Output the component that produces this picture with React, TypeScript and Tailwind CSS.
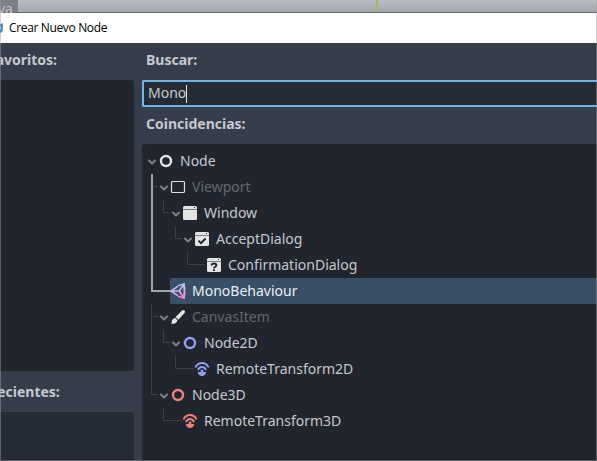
import React from "react";

type IconKind =
  | "node"
  | "viewport"
  | "window"
  | "accept"
  | "confirm"
  | "mono"
  | "canvas"
  | "node2d"
  | "remote2d"
  | "node3d"
  | "remote3d";

function Ring({ color }: { color: string }) {
  return <circle cx="8" cy="8" r="5" fill="none" stroke={color} strokeWidth="2.400" />;
}

function Remote({ color }: { color: string }) {
  return (
    <g fill="none" stroke={color} strokeWidth="2" strokeLinecap="round">
      <path d="M1.800 5.700C3.500 3.100 5.600 2.100 8 2.100s4.500 1 6.200 3.600" />
      <path d="M4.300 8.300C5.100 6.700 6.400 5.900 8 5.900s2.900.8 3.700 2.400" />
      <path
        d="M8 8.400a1.500 1.500 0 0 1 1.300 2.200V11H12.200c0 2.300-1.800 4-4.200 4s-4.200-1.700-4.200-4h2.900v-.4A1.500 1.500 0 0 1 8 8.400z"
        fill={color}
        stroke="none"
      />
    </g>
  );
}

function WindowFrame() {
  return (
    <>
      <path d="M2.500 1h11A1.500 1.500 0 0 1 15 2.500V4H1V2.500A1.500 1.500 0 0 1 2.500 1z" fill="#e4e4e4" />
      <path d="M1 5h14v8.500a1.500 1.500 0 0 1-1.500 1.500h-11A1.500 1.500 0 0 1 1 13.500z" fill="#e4e4e4" />
      <path d="M1 4h14v1H1z" fill="#7d8086" />
      <path d="M12 2h1v1h-1z" fill="#21262e" />
    </>
  );
}

function Icon({ kind }: { kind: IconKind }) {
  return (
    <svg className="h-4 w-4 shrink-0" viewBox="0 0 16 16">
      {kind === "node" && <Ring color="#e4e4e4" />}
      {kind === "node2d" && <Ring color="#8f9fee" />}
      {kind === "node3d" && <Ring color="#f07f80" />}
      {kind === "remote2d" && <Remote color="#8f9fee" />}
      {kind === "remote3d" && <Remote color="#f07f80" />}
      {kind === "viewport" && (
        <rect x="1.500" y="2.500" width="13" height="11" rx="1" fill="none" stroke="#e0e0e0" strokeWidth="1.200" />
      )}
      {kind === "window" && <WindowFrame />}
      {kind === "accept" && (
        <>
          <WindowFrame />
          <path d="M4.500 9.600l2.500 2.500 4.600-4.600" fill="none" stroke="#21262e" strokeWidth="2" />
        </>
      )}
      {kind === "confirm" && (
        <>
          <WindowFrame />
          <path
            d="M5.600 8.500C5.700 7.100 6.800 6.500 8 6.500c1.400 0 2.400.7 2.400 1.800C10.400 9.900 8 9.700 8 11.400M8 12.300V14"
            fill="none"
            stroke="#21262e"
            strokeWidth="1.800"
          />
        </>
      )}
      {kind === "mono" && (
        <>
          <defs>
            <linearGradient id="monoFill" gradientUnits="userSpaceOnUse" x1="6" y1="2" x2="11" y2="15">
              <stop offset="0.1" stopColor="#b4bff2" />
              <stop offset="0.55" stopColor="#d8b0ee" />
              <stop offset="1" stopColor="#ff80dc" />
            </linearGradient>
          </defs>
          <g fill="none" stroke="url(#monoFill)" strokeWidth="1.600" strokeLinejoin="round" strokeLinecap="round">
            <path d="M7.300 3.600L1.200 8l6.100 4.400" />
            <path d="M8.600 2.500L14 .9l.8 5.200" />
            <path d="M8.600 13.500l5.400 1.600.8-5.200" />
            <path d="M1.200 8h8M9.200 8l3.900-5.700M9.200 8l3.900 5.700M14 .9c.5 4.700.5 9.500 0 14.200" />
          </g>
        </>
      )}
      {kind === "canvas" && (
        <g fill="#e4e4e4">
          <path d="M12 1.500c.8-.8 1.900-.7 2.500-.1.700.7.600 1.700 0 2.500L8.400 10.700 5.500 7.900z" />
          <path d="M4.800 8.600l2.700 2.700-.6 1.100C6.400 14.500 3.500 15.200 1 14.700c1-.8.600-1.500.8-2.600.3-1.600 1.500-2.400 2.500-2.700z" />
        </g>
      )}
    </svg>
  );
}

function Chevron() {
  return (
    <svg className="h-2 w-2 shrink-0" viewBox="0 0 8 8">
      <path d="M1 2.500l3 3 3-3" fill="none" stroke="#7d8087" strokeWidth="2" strokeLinecap="round" strokeLinejoin="round" />
    </svg>
  );
}

interface Row {
  label: string;
  icon: IconKind;
  indent: string;
  leaf?: boolean;
  muted?: boolean;
  selected?: boolean;
}

const rows: Row[] = [
  { label: "Node", icon: "node", indent: "w-[6px]" },
  { label: "Viewport", icon: "viewport", indent: "w-[18px]", muted: true },
  { label: "Window", icon: "window", indent: "w-[30px]" },
  { label: "AcceptDialog", icon: "accept", indent: "w-[42px]" },
  { label: "ConfirmationDialog", icon: "confirm", indent: "w-[54px]", leaf: true },
  { label: "MonoBehaviour", icon: "mono", indent: "w-[18px]", leaf: true, selected: true },
  { label: "CanvasItem", icon: "canvas", indent: "w-[18px]", muted: true },
  { label: "Node2D", icon: "node2d", indent: "w-[30px]" },
  { label: "RemoteTransform2D", icon: "remote2d", indent: "w-[42px]", leaf: true },
  { label: "Node3D", icon: "node3d", indent: "w-[18px]" },
  { label: "RemoteTransform3D", icon: "remote3d", indent: "w-[30px]", leaf: true },
];

function TreeRow({ row }: { row: Row }) {
  const tone = row.muted ? "text-[#63666d]" : row.selected ? "text-[#e9eef5]" : "text-[#c5c8ce]";
  return (
    <div className="flex h-[26px] items-stretch">
      <div className={`shrink-0 ${row.indent}`} />
      <div className="flex w-[10px] shrink-0 items-center pt-px">{!row.leaf && <Chevron />}</div>
      <div className={`flex grow items-center gap-[6px] ${row.selected ? "rounded-l-[2px] bg-[#384f66]" : ""}`}>
        <Icon kind={row.icon} />
        <span className={`whitespace-nowrap text-[14px] leading-[26px] ${tone}`}>{row.label}</span>
      </div>
    </div>
  );
}

function TreeLines() {
  return (
    <svg className="pointer-events-none absolute left-0 top-0" width="80" height="316" viewBox="0 0 80 316" fill="none">
      <path
        stroke="#3b4048"
        d="M11 42.500h5M9.500 160v90.500H16M11 172.500h5M21.500 56v12.500H28M33.500 82v12.500H40M45.500 108v12.500H63M21.500 186v12.500H28M33.500 212v12.500H52M21.500 264v12.500H40"
      />
      <path stroke="#a0a3aa" strokeWidth="2" d="M10 30v117h19" />
    </svg>
  );
}

function Heading({ children }: { children: React.ReactNode }) {
  return <div className="whitespace-nowrap text-[14px] font-bold leading-5 text-[#c5c8d0]">{children}</div>;
}

export default function App() {
  return (
    <div className="relative flex h-[461px] w-[597px] flex-col overflow-hidden bg-[#363d4a] font-['Noto_Sans',sans-serif]">
      <div className="flex h-[13px] shrink-0 border-b border-[#66686c] bg-linear-to-b from-[#b8bcc4] to-[#a4a7ac]">
        <div className="h-3 w-[18px] bg-[#7d8086] text-[14px] leading-[17px] text-[#c3c6cb]">
          <span className="-ml-[2px]">va</span>
        </div>
        <div className="ml-[358px] h-3 w-[2px] bg-[#a5bd54]" />
      </div>
      <header className="flex h-[30px] shrink-0 items-center bg-white">
        <svg className="h-3 w-[9px] shrink-0" viewBox="0 0 9 12">
          <path d="M0 2h1l1-1 1 1-.3 6.500C2.500 10 1.500 11 0 11z" fill="#478cbf" />
          <path d="M0 5h1v2H0z" fill="#dcebf5" />
        </svg>
        <span className="whitespace-nowrap font-['Open_Sans','Noto_Sans',sans-serif] text-[12px] tracking-[-0.350px] text-black">
          Crear Nuevo Node
        </span>
      </header>
      <main className="flex min-h-0 grow gap-2">
        <aside className="flex w-[134px] shrink-0 flex-col">
          <div className="-ml-[12px] h-[37px] pt-[7px]"><Heading>Favoritos:</Heading></div>
          <div className="h-[291px] shrink-0 rounded-r-[3px] bg-[#21262e]" />
          <div className="-ml-[12px] h-[41px] pt-[11px]"><Heading>Recientes:</Heading></div>
          <div className="grow rounded-tr-[3px] bg-[#262c35]" />
        </aside>
        <section className="flex grow flex-col">
          <div className="h-[37px] pl-1 pt-[7px]"><Heading>Buscar:</Heading></div>
          <div className="flex h-[27px] shrink-0 items-center rounded-l-[2px] border-2 border-r-0 border-[#77b1e7] bg-[#262c35] pl-1 text-[14px] text-[#c5c8ce]">
            <span className="pb-[2px] leading-5">Mono</span>
            <span className="h-[18px] w-px bg-[#e1e3e8]" />
          </div>
          <div className="h-[37px] pl-1 pt-[7px]"><Heading>Coincidencias:</Heading></div>
          <div className="relative grow rounded-tl-[3px] bg-[#21262e] pt-1">
            {rows.map((row) => <TreeRow key={row.label} row={row} />)}
            <TreeLines />
          </div>
        </section>
      </main>
      <div className="pointer-events-none absolute inset-0 border-x border-b border-[#a0a0a0]/45" />
    </div>
  );
}
